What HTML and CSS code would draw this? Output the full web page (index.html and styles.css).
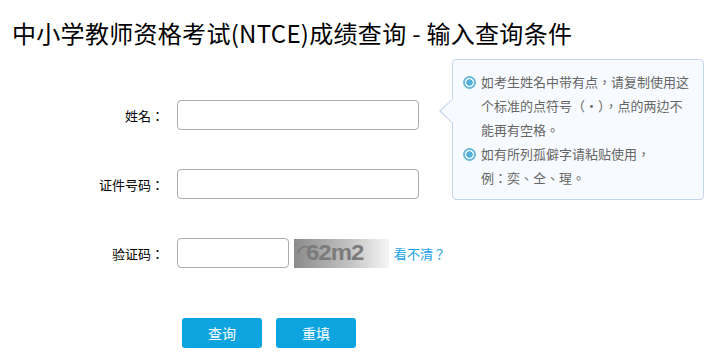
FILE: index.html
```html
<!DOCTYPE html>
<html lang="zh-CN">
<head>
    <meta charset="UTF-8">
    <title>NTCE成绩查询</title>
    <link rel="stylesheet" href="styles.css">
</head>
<body>
    <h1 class="page-title">中小学教师资格考试(NTCE)成绩查询 - 输入查询条件</h1>

    <form class="query-form">
        <div class="form-row">
            <label class="form-label">姓名：</label>
            <input class="form-input" type="text">

            <!-- 姓名提示 -->
            <div class="tip-box">
                <ul class="tip-list">
                    <li>如考生姓名中带有点，请复制使用这个标准的点符号（·），点的两边不能再有空格。</li>
                    <li>如有所列孤僻字请粘贴使用，<br>例：奕、仝、瑆。</li>
                </ul>
            </div>
        </div>

        <div class="form-row">
            <label class="form-label">证件号码：</label>
            <input class="form-input" type="text">
        </div>

        <div class="form-row">
            <label class="form-label">验证码：</label>
            <input class="form-input form-input-short" type="text">
            <div class="captcha">
                <svg class="captcha-curl" width="14" height="12" viewBox="0 0 14 12">
                    <path d="M1 10 C3 4 8 2 13 5" fill="none" stroke="#7a7a7a" stroke-width="1.6"/>
                </svg>
                <span class="captcha-text">62m2</span>
            </div>
            <a class="captcha-link" href="#">看不清？</a>
        </div>

        <div class="form-actions">
            <button class="btn" type="button">查询</button>
            <button class="btn" type="reset">重填</button>
        </div>
    </form>
</body>
</html>
```

FILE: styles.css
```css
body {
    margin: 0;
    font-family: "Noto Sans CJK SC", "Liberation Sans", sans-serif;
    color: #222;
    background: #fff;
}

.page-title {
    margin: 16px 0 0 12px;
    font-size: 24px;
    line-height: 34px;
    font-weight: normal;
    letter-spacing: 0.3px;
    color: #000;
}

.query-form {
    margin-top: 50px;
}

/* 全角标点居中 */
.form-label,
.captcha-link,
.tip-list {
    font-family: "Noto Sans CJK TC", "Noto Sans CJK SC", sans-serif;
    font-feature-settings: "locl" 0;
}

.form-row {
    position: relative;
    display: flex;
    align-items: center;
    height: 30px;
    margin-bottom: 39px;
}

.form-label {
    width: 164px;
    margin-right: 13px;
    text-align: right;
    font-size: 13px;
    color: #000;
}

.form-input {
    box-sizing: border-box;
    width: 242px;
    height: 30px;
    border: 1px solid #aaa;
    border-radius: 4px;
    padding: 0 8px;
    font-size: 13px;
}

.form-input-short {
    width: 112px;
}

.captcha {
    position: relative;
    box-sizing: border-box;
    width: 95px;
    height: 29px;
    margin-left: 5px;
    padding-left: 12px;
    background: linear-gradient(to right, #8b8b8b, #c4c4c4 60%, #f6f6f6);
    display: flex;
    align-items: center;
}

.captcha-curl {
    position: absolute;
    left: 3px;
    top: 4px;
}

.captcha-text {
    font-family: "Liberation Sans", sans-serif;
    font-weight: bold;
    font-size: 24px;
    letter-spacing: -1px;
    color: #7b7b7b;
    transform: scaleY(0.9);
}

.captcha-link {
    margin-left: 5px;
    font-size: 13px;
    color: #1a9fe6;
    text-decoration: none;
}

/* 提示框 */
.tip-box {
    position: absolute;
    left: 452px;
    top: -41px;
    box-sizing: border-box;
    width: 252px;
    height: 141px;
    padding: 10px 12px 10px 0;
    background: #f7fbff;
    border: 1px solid #c6d5ee;
    border-radius: 4px;
}

.tip-box::before,
.tip-box::after {
    content: "";
    position: absolute;
    top: 38px;
    width: 0;
    height: 0;
    border-style: solid;
}

.tip-box::before {
    left: -14px;
    border-width: 13px 14px 13px 0;
    border-color: transparent #c6d5ee transparent transparent;
}

.tip-box::after {
    left: -12px;
    border-width: 13px 13px 13px 0;
    border-color: transparent #f7fbff transparent transparent;
}

.tip-list {
    margin: 0;
    padding: 0;
    list-style: none;
    font-size: 13px;
    line-height: 24px;
    color: #666;
}

.tip-list li {
    position: relative;
    padding-left: 28px;
}

.tip-list li::before {
    content: "";
    position: absolute;
    left: 10px;
    top: 6px;
    box-sizing: border-box;
    width: 13px;
    height: 13px;
    border: 2px solid #68b9de;
    border-radius: 50%;
    background: radial-gradient(circle, #55afda 0 3px, #fff 3.5px);
}

.form-actions {
    display: flex;
    gap: 14px;
    padding-left: 182px;
    margin-top: 50px;
}

.btn {
    width: 80px;
    height: 30px;
    border: none;
    border-radius: 3px;
    background: #0ea4e0;
    color: #fff;
    font-family: inherit;
    font-size: 14px;
    cursor: pointer;
}
```
